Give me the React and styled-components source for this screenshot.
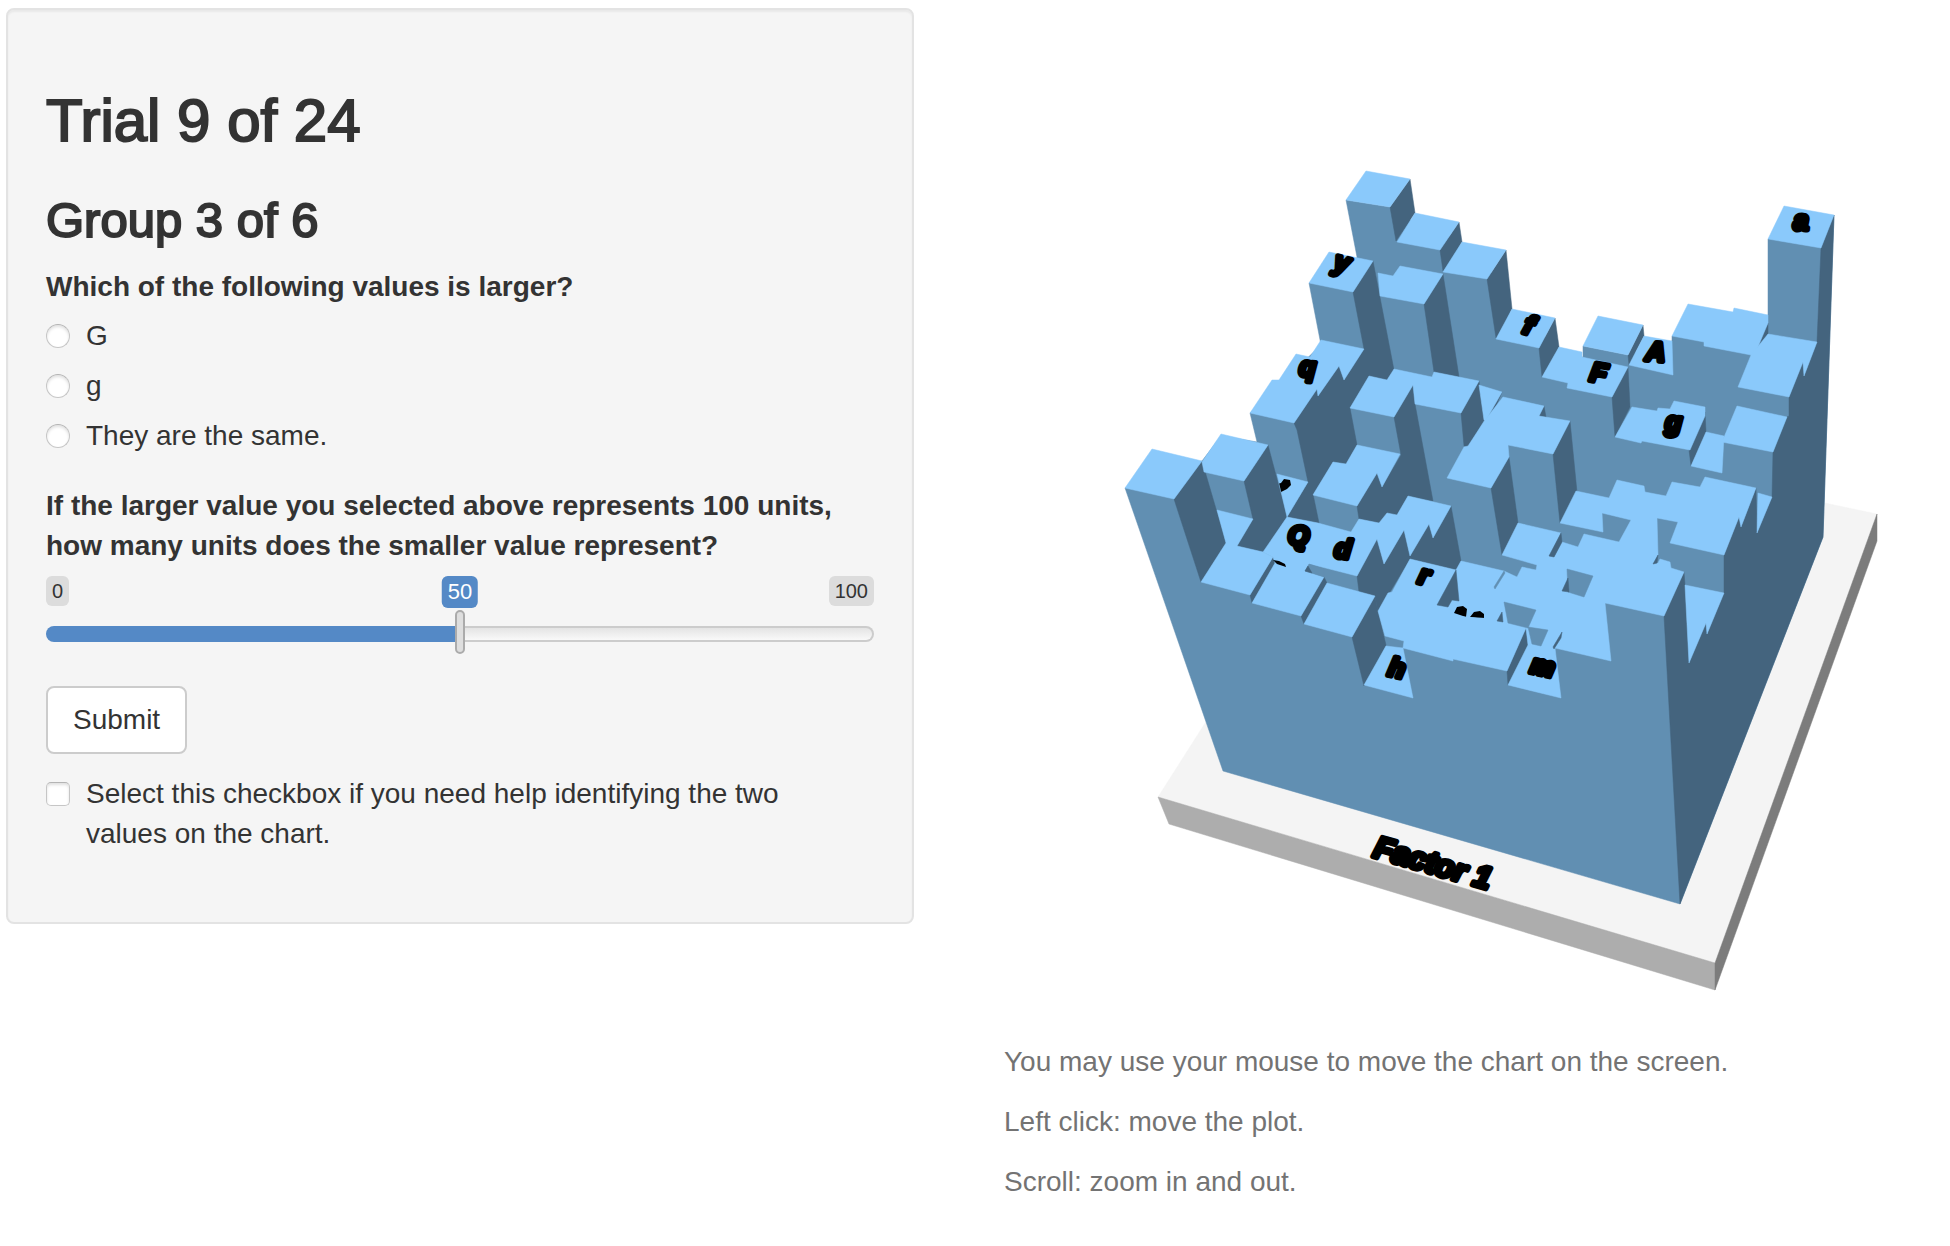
import React, { useState } from "react";
import styled, { createGlobalStyle } from "styled-components";

const GlobalStyle = createGlobalStyle`
  *, *::before, *::after { box-sizing: border-box; }
  body {
    margin: 0;
    background: #fff;
    color: #333;
    font-family: "Liberation Sans", Arial, sans-serif;
    font-size: 28px;
    line-height: 40px;
  }
`;

const Page = styled.div`
  display: grid;
  grid-template-columns: minmax(0, 1fr) minmax(0, 1fr);
  gap: 90px;
  align-items: start;
  padding: 8px 38px 0 6px;
`;

const Panel = styled.form`
  padding: 78px 38px 68px;
  background: #f5f5f5;
  border: 2px solid #e3e3e3;
  border-radius: 8px;
  box-shadow: inset 0 2px 2px rgba(0, 0, 0, 0.05);
`;

const TrialHeading = styled.h2`
  margin: 0 0 40px;
  font-size: 60px;
  line-height: 66px;
  font-weight: 400;
  -webkit-text-stroke: 2px currentColor;
`;

const GroupHeading = styled.h3`
  margin: 0 0 20px;
  font-size: 49px;
  line-height: 53px;
  font-weight: 400;
  -webkit-text-stroke: 2px currentColor;
`;

const Question = styled.fieldset`
  display: flex;
  flex-direction: column;
  gap: 10px;
  min-width: 0;
  margin: 0 0 30px;
  padding: 0;
  border: 0;
`;

const Legend = styled.legend`
  padding: 0;
  margin-bottom: 9px;
  font-weight: 700;
`;

const Choice = styled.label`
  display: flex;
  align-items: flex-start;
  gap: 16px;
  padding-right: 20px;
`;

const Tick = styled.input`
  appearance: none;
  flex: none;
  width: 24px;
  height: 24px;
  margin: 8px 0 0;
  background: #fff;
  border: 1px solid #c6c6c6;
  border-top-color: #b4b4b4;
  border-radius: ${(p) => (p.type === "radio" ? "50%" : "5px")};
  box-shadow: inset 0 2px 3px rgba(0, 0, 0, 0.12);

  &:checked {
    background: #428bca;
    box-shadow: inset 0 0 0 5px #fff;
  }
`;

const SliderLabel = styled.label`
  display: block;
  margin-bottom: 10px;
  font-weight: 700;
`;

const Scale = styled.div`
  position: relative;
  display: flex;
  justify-content: space-between;
  height: 34px;
`;

const Limit = styled.span`
  height: 30px;
  padding: 0 6px;
  background: #dcdcdc;
  border-radius: 6px;
  font-size: 20px;
  line-height: 30px;
`;

const Current = styled.output`
  position: absolute;
  top: 0;
  height: 32px;
  padding: 0 6px;
  transform: translateX(-50%);
  background: #5489c6;
  border-radius: 6px;
  color: #fff;
  font-size: 22px;
  line-height: 32px;
`;

const Range = styled.input`
  appearance: none;
  display: block;
  width: 100%;
  height: 48px;
  margin: 0 0 28px;
  background: transparent;

  &::-webkit-slider-runnable-track {
    height: 16px;
    border: 2px solid transparent;
    border-radius: 16px;
    background:
      linear-gradient(#5489c6, #5489c6) border-box 0 0 / var(--filled) 100% no-repeat,
      linear-gradient(#e4e4e4, #f9f9f9) padding-box,
      #ccc border-box;
  }

  &::-webkit-slider-thumb {
    appearance: none;
    width: 10px;
    height: 44px;
    margin-top: -18px;
    background: #dedede;
    border: 2px solid #ababab;
    border-radius: 6px;
  }
`;

const Submit = styled.button`
  display: block;
  margin: 0 0 20px;
  padding: 12px 25px;
  background: #fff;
  border: 2px solid #ccc;
  border-radius: 8px;
  color: inherit;
  font: inherit;
`;

const Chart = styled.svg`
  display: block;
  width: 100%;
  height: auto;
`;

const Face = styled.polygon`
  fill: ${(p) => p.$fill};
  stroke: ${(p) => p.$fill};
  stroke-width: 0.5;
`;

const BarLabel = styled.text`
  fill: #000;
  stroke: #000;
  stroke-width: 5;
  stroke-linejoin: round;
  font-family: "Liberation Sans", Arial, sans-serif;
  font-size: ${(p) => p.$size || 27}px;
  font-weight: 700;
  font-style: italic;
  text-anchor: middle;
`;

const Help = styled.p`
  margin: 0 0 20px;
  color: #737373;
`;

const TOP = "#8ac9fb";
const FRONT = "#618fb2";
const SIDE = "#44647e";

const plate = [
  ["#f4f4f4", "1158,797 1300,574 1825,503 1877,514 1715,963"],
  ["#adadad", "1158,797 1715,963 1715,990 1169,824"],
  ["#7c7c7c", "1715,963 1877,514 1877,541 1715,990"],
];

const body = [
  "1125,488 1202,461 1221,436 1257,442 1250,413 1321,345 1309,283 1353,270 1357,257 1346,200 1390,207 1410,220 1459,240 1462,260 1506,280 1512,330 1555,340 1560,360 1583,357 1583,346 1628,355 1644,350 1672,341 1672,336 1760,320 1768,315 1768,239 1821,240 1834,215 1823,537 1680,904 1223,771",
];

const sides = [
  "1834,215 1823,537 1680,904 1664,616 1684,572 1685,585 1689,663 1706,623 1707,634 1724,593 1724,555 1739,517 1741,527 1756,488 1757,533 1772,497 1773,452 1787,417 1789,416 1789,397 1803,362 1804,376 1817,342 1821,248",
  "1410,179 1415,213 1396,241 1390,207",
  "1459,222 1462,242 1443,271 1440,250",
  "1506,250 1512,309 1496,338 1487,279",
  "1555,318 1559,347 1542,377 1539,348",
  "1643,325 1644,336 1629,365 1628,355",
  "1628,367 1630,407 1615,437 1612,397",
  "1768,323 1768,334 1759,353 1754,353",
  "1705,412 1706,432 1691,466 1689,450",
  "1373,261 1394,370 1387,380 1369,376 1350,408 1357,445 1346,464 1333,462 1313,494 1319,523 1287,517 1308,482 1297,430 1294,423 1317,389 1318,396 1339,366 1344,380 1364,349 1353,292",
  "1443,274 1459,377 1434,372 1424,304",
  "1394,417 1401,455 1382,487 1377,473 1357,506 1359,519 1379,523 1397,515 1408,496 1433,501 1415,404 1413,385",
  "1479,381 1484,420 1468,447 1464,446 1461,413",
  "1502,392 1490,420 1486,421",
  "1544,406 1546,417 1539,416",
  "1570,421 1577,492 1560,523 1553,454",
  "1509,457 1518,523 1502,555 1491,488",
  "1451,506 1461,561 1456,570 1410,559 1390,592 1378,612 1375,596 1359,592 1357,576 1377,539 1384,564 1404,530 1410,556 1429,524 1433,538",
  "1268,445 1287,517 1264,552 1237,546 1253,519 1244,481",
  "1202,461 1226,543 1201,582 1174,499",
  "1273,557 1275,563 1252,603 1250,595",
  "1324,577 1327,583 1304,624 1301,616",
  "1375,596 1378,612 1386,645 1364,686 1352,637",
  "1526,628 1528,645 1508,685 1507,671",
];

const tops = [
  "1366,171 1410,179 1390,207 1346,200",
  "1415,213 1459,222 1440,250 1397,242",
  "1462,242 1506,250 1487,279 1443,272",
  "1512,309 1555,318 1539,348 1496,339",
  "1559,347 1582,352 1582,357 1628,367 1612,397 1567,388 1568,383 1542,377",
  "1598,316 1643,325 1628,355 1583,346",
  "1644,336 1672,341 1673,375 1629,365",
  "1688,304 1733,312 1734,308 1768,315 1768,323 1755,354 1751,355 1704,346 1704,342 1672,336",
  "1784,206 1834,215 1821,248 1768,239",
  "1768,334 1817,342 1804,376 1803,362 1789,397 1738,387 1751,355",
  "1632,407 1657,411 1658,408 1670,409 1674,401 1705,407 1705,416 1690,450 1642,441 1641,443 1615,437",
  "1706,432 1724,436 1722,473 1691,466",
  "1737,406 1787,417 1773,452 1722,442",
  "1758,493 1772,497 1757,533",
  "1685,585 1724,593 1707,634 1706,623 1689,663",
  "1378,273 1393,276 1400,266 1443,274 1424,304 1380,296",
  "1329,252 1373,261 1353,292 1309,283",
  "1321,340 1364,349 1344,380 1339,366 1318,396 1317,389 1294,423 1250,413 1272,380 1279,380 1296,354 1310,357",
  "1221,434 1268,445 1244,481 1204,472 1202,462",
  "1277,474 1308,482 1287,517",
  "1152,449 1202,461 1174,499 1125,488",
  "1217,510 1253,519 1237,546 1263,552 1273,557 1250,595 1201,582 1226,543",
  "1287,517 1318,523 1351,532 1359,519 1379,523 1387,513 1397,515 1408,496 1451,506 1433,538 1429,524 1410,556 1404,530 1384,564 1377,539 1357,576 1310,564 1305,571 1324,577 1301,616 1252,603 1275,563 1273,557 1263,552",
  "1327,583 1375,596 1352,637 1304,624",
  "1386,646 1403,648 1413,698 1364,685",
  "1394,369 1432,377 1434,372 1479,381 1461,413 1415,404 1413,385 1394,417 1350,408 1369,376 1387,380",
  "1357,445 1400,454 1382,487 1377,473 1357,506 1313,495 1333,462 1346,464",
  "1479,385 1502,392 1486,420 1484,420",
  "1503,397 1544,406 1539,416 1570,421 1553,454 1508,445 1509,457 1491,488 1447,478 1464,447 1468,446 1485,420",
  "1576,491 1609,498 1617,480 1644,486 1645,492 1666,496 1672,482 1700,487 1705,477 1756,488 1741,527 1739,517 1724,555 1670,543 1678,522 1657,518 1658,555 1653,564 1658,563 1660,559 1670,562 1671,568 1684,572 1664,616 1605,603 1611,661 1555,648 1561,698 1508,685 1528,645 1526,628 1507,671 1453,659 1453,661 1403,648 1404,641 1385,636 1378,611 1388,593 1392,592 1410,559 1456,570 1461,561 1504,571 1517,577 1522,567 1536,570 1537,565 1502,555 1518,523 1561,533 1549,556 1554,557 1562,542 1578,547 1584,534 1619,542 1631,520 1602,513 1603,532 1560,523",
];

const gaps = [
  [SIDE, "1456,570 1459,601 1452,600 1448,607 1437,605"],
  [SIDE, "1561,533 1562,542 1554,557 1549,556"],
  [FRONT, "1504,602 1536,610 1528,628 1508,623"],
  [SIDE, "1502,612 1503,622 1497,621"],
  [FRONT, "1528,627 1548,630 1541,646 1532,644"],
  [SIDE, "1562,632 1561,638 1554,649 1553,647"],
  [FRONT, "1567,569 1593,576 1584,597 1568,592"],
  [SIDE, "1568,578 1569,592 1562,591"],
  [SIDE, "1658,555 1657,563 1653,564"],
  [FRONT, "1504,571 1505,573 1495,589 1494,587"],
  [FRONT, "1309,564 1324,569 1324,577 1305,571"],
  [SIDE, "1308,566 1312,573 1305,571"],
];

const labels = [
  ["y", 1340, 271, 14],
  ["q", 1307, 376, 4],
  ["f", 1526, 334, 18],
  ["F", 1597, 382, 10],
  ["A", 1655, 361, 4],
  ["a", 1801, 230, 0],
  ["g", 1673, 431, 4],
  ["Q", 1298, 545, 4],
  ["d", 1342, 558, 6],
  ["r", 1422, 584, 14],
  ["h", 1395, 677, 12],
  ["m", 1541, 675, 12],
];

function BarChart() {
  return (
    <Chart viewBox="1004 8 908 1034" role="img" aria-label="3D bar chart">
      <clipPath id="peek-m">
        <polygon points="1440,600 1500,600 1500,619 1440,615" />
      </clipPath>
      <clipPath id="peek-e">
        <polygon points="1277,474 1308,482 1287,517" />
      </clipPath>
      {plate.map(([fill, pts]) => <Face key={pts} $fill={fill} points={pts} />)}
      {body.map((pts) => <Face key={pts} $fill={FRONT} points={pts} />)}
      {sides.map((pts) => <Face key={pts} $fill={SIDE} points={pts} />)}
      {tops.map((pts) => <Face key={pts} $fill={TOP} points={pts} />)}
      {gaps.map(([fill, pts]) => <Face key={pts} $fill={fill} points={pts} />)}
      {labels.map(([t, x, y, r]) => (
        <BarLabel key={t} transform={`translate(${x} ${y}) rotate(${r})`}>{t}</BarLabel>
      ))}
      <g clipPath="url(#peek-m)">
        <path d="M1454 613l3-6 6-1 4 3-1 8zM1470 617l4-5 6-1 4 3v5z" />
      </g>
      <g clipPath="url(#peek-e)">
        <path d="M1277 484l4-1 3-4 6 1 1 5-4 4-6 3-3-3z" />
      </g>
      <path d="M1273 560l4 4 9 3-1-3-6-3z" />
      <BarLabel $size={31} transform="translate(1430 873) rotate(16)">Factor 1</BarLabel>
    </Chart>
  );
}

export default function App() {
  const [units, setUnits] = useState(50);
  const filled = `${units}%`;
  return (
    <>
      <GlobalStyle />
      <Page>
        <Panel onSubmit={(e) => e.preventDefault()}>
          <TrialHeading>Trial 9 of 24</TrialHeading>
          <GroupHeading>Group 3 of 6</GroupHeading>
          <Question>
            <Legend>Which of the following values is larger?</Legend>
            {["G", "g", "They are the same."].map((text) => (
              <Choice key={text}>
                <Tick type="radio" name="larger" value={text} />
                <span>{text}</span>
              </Choice>
            ))}
          </Question>
          <SliderLabel htmlFor="units">
            If the larger value you selected above represents 100 units, how many units does the
            smaller value represent?
          </SliderLabel>
          <Scale>
            <Limit>0</Limit>
            <Current htmlFor="units" style={{ left: filled }}>{units}</Current>
            <Limit>100</Limit>
          </Scale>
          <Range
            id="units"
            type="range"
            min="0"
            max="100"
            value={units}
            onChange={(e) => setUnits(Number(e.target.value))}
            style={{ "--filled": filled }}
          />
          <Submit type="submit">Submit</Submit>
          <Choice>
            <Tick type="checkbox" name="help" />
            <span>Select this checkbox if you need help identifying the two values on the chart.</span>
          </Choice>
        </Panel>
        <main>
          <BarChart />
          <Help>You may use your mouse to move the chart on the screen.</Help>
          <Help>Left click: move the plot.</Help>
          <Help>Scroll: zoom in and out.</Help>
        </main>
      </Page>
    </>
  );
}
